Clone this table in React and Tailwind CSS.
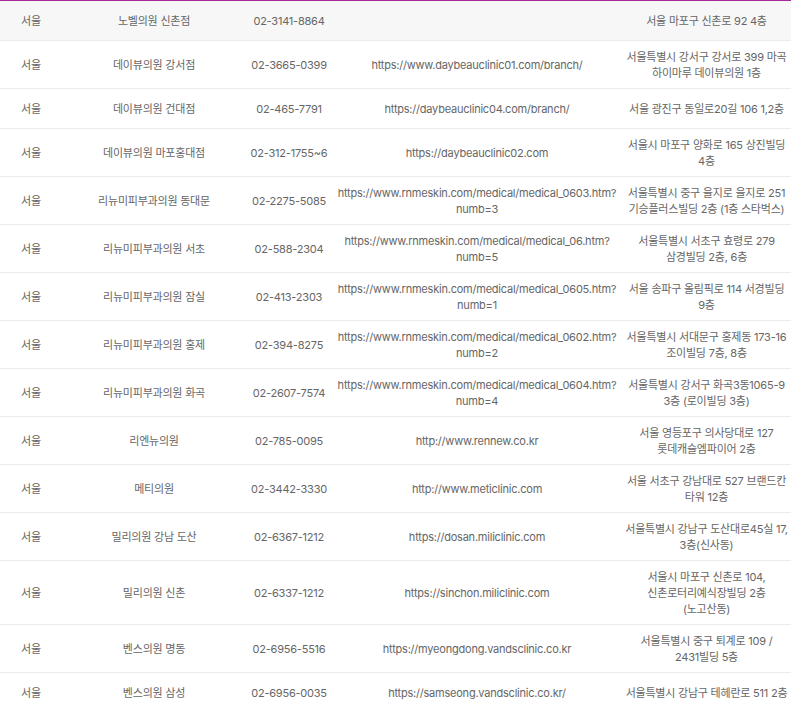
import React from "react";

const rows = [
  ["노벨의원 신촌점", "02-3141-8864", "", "서울 마포구 신촌로 92 4층"],
  ["데이뷰의원 강서점", "02-3665-0399", "https://www.daybeauclinic01.com/branch/", "서울특별시 강서구 강서로 399 마곡\n하이마루 데이뷰의원 1층"],
  ["데이뷰의원 건대점", "02-465-7791", "https://daybeauclinic04.com/branch/", "서울 광진구 동일로20길 106 1,2층"],
  ["데이뷰의원 마포홍대점", "02-312-1755~6", "https://daybeauclinic02.com", "서울시 마포구 양화로 165 상진빌딩\n4층"],
  ["리뉴미피부과의원 동대문", "02-2275-5085", "https://www.rnmeskin.com/medical/medical_0603.htm?\nnumb=3", "서울특별시 중구 을지로 을지로 251\n기승플러스빌딩 2층 (1층 스타벅스)"],
  ["리뉴미피부과의원 서초", "02-588-2304", "https://www.rnmeskin.com/medical/medical_06.htm?\nnumb=5", "서울특별시 서초구 효령로 279\n삼경빌딩 2층, 6층"],
  ["리뉴미피부과의원 잠실", "02-413-2303", "https://www.rnmeskin.com/medical/medical_0605.htm?\nnumb=1", "서울 송파구 올림픽로 114 서경빌딩\n9층"],
  ["리뉴미피부과의원 홍제", "02-394-8275", "https://www.rnmeskin.com/medical/medical_0602.htm?\nnumb=2", "서울특별시 서대문구 홍제동 173-16\n조이빌딩 7층, 8층"],
  ["리뉴미피부과의원 화곡", "02-2607-7574", "https://www.rnmeskin.com/medical/medical_0604.htm?\nnumb=4", "서울특별시 강서구 화곡3동1065-9\n3층 (로이빌딩 3층)"],
  ["리엔뉴의원", "02-785-0095", "http://www.rennew.co.kr", "서울 영등포구 의사당대로 127\n롯데캐슬엠파이어 2층"],
  ["메티의원", "02-3442-3330", "http://www.meticlinic.com", "서울 서초구 강남대로 527 브랜드칸\n타워 12층"],
  ["밀리의원 강남 도산", "02-6367-1212", "https://dosan.miliclinic.com", "서울특별시 강남구 도산대로45실 17,\n3층(신사동)"],
  ["밀리의원 신촌", "02-6337-1212", "https://sinchon.miliclinic.com", "서울시 마포구 신촌로 104,\n신촌로터리예식장빌딩 2층\n(노고산동)"],
  ["벤스의원 명동", "02-6956-5516", "https://myeongdong.vandsclinic.co.kr", "서울특별시 중구 퇴계로 109 /\n2431빌딩 5층"],
  ["벤스의원 삼성", "02-6956-0035", "https://samseong.vandsclinic.co.kr/", "서울특별시 강남구 테헤란로 511 2층"],
];

function Lines({ text }) {
  const parts = text.split("\n");
  return (
    <span>
      {parts.map((p, i) => (
        <React.Fragment key={i}>
          {i > 0 && <br />}
          <span className="whitespace-nowrap">{p}</span>
        </React.Fragment>
      ))}
    </span>
  );
}

const cell = "flex items-center justify-center text-center min-h-[39px] pt-2 pb-[7px]";

export default function App() {
  return (
    <div
      className="w-[791px] bg-white text-[11px] leading-4 tracking-[-0.02em] text-[#666]"
      style={{ fontFamily: 'Inter, "Noto Sans CJK KR", sans-serif' }}
    >
      <div className="border-t border-[#a12a98]">
        {rows.map((r, i) => (
          <div
            key={i}
            className={`flex border-b border-[#ebebeb] ${i === 0 ? "bg-[#f7f7f7]" : "bg-white"}`}
          >
            <div className={`${cell} w-[62px] shrink-0`}>서울</div>
            <div className={`${cell} w-[184px] shrink-0`}>
              <Lines text={r[0]} />
            </div>
            <div className={`${cell} w-[86px] shrink-0`}>
              <Lines text={r[1]} />
            </div>
            <div className={`${cell} w-[290px] shrink-0`}>
              <Lines text={r[2]} />
            </div>
            <div className={`${cell} w-[169px] shrink-0`}>
              <Lines text={r[3]} />
            </div>
          </div>
        ))}
      </div>
    </div>
  );
}
